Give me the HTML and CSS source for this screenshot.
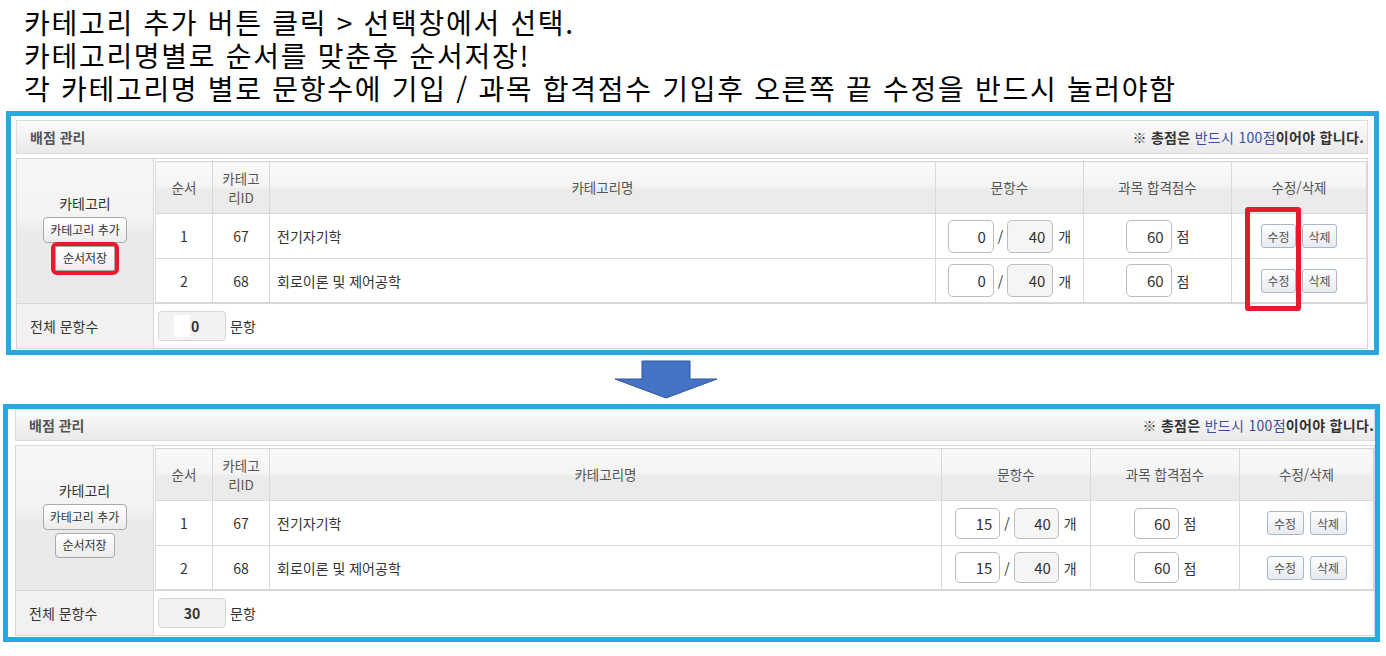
FILE: index.html
```html
<!DOCTYPE html>
<html lang="ko">
<head>
<meta charset="utf-8">
<title>배점 관리</title>
<link rel="stylesheet" href="styles.css">
</head>
<body>
<div class="notes">
  <p>카테고리 추가 버튼 클릭 &gt; 선택창에서 선택.</p>
  <p>카테고리명별로 순서를 맞춘후 순서저장!</p>
  <p>각 카테고리명 별로 문항수에 기입 / 과목 합격점수 기입후 오른쪽 끝 수정을 반드시 눌러야함</p>
</div>

<section class="panel p1">
  <div class="panel-head">
    <h2>배점 관리</h2>
    <p class="notice">※ 총점은 <span>반드시 100점</span>이어야 합니다.</p>
  </div>
  <div class="score">
    <div class="cat">
      <span class="cat-title">카테고리</span>
      <button class="btn add">카테고리 추가</button>
      <button class="btn save hl">순서저장</button>
    </div>
    <div class="list-wrap">
      <table class="list">
        <colgroup><col class="c-seq"><col class="c-id"><col class="c-name"><col class="c-cnt"><col class="c-pass"><col class="c-act"></colgroup>
        <thead>
          <tr><th>순서</th><th>카테고<br>리ID</th><th>카테고리명</th><th>문항수</th><th>과목 합격점수</th><th>수정/삭제</th></tr>
        </thead>
        <tbody>
          <tr class="r1">
            <td>1</td><td>67</td><td class="name">전기자기학</td>
            <td><input class="num" type="text" value="0" readonly><span class="sep">/</span><input class="num ro" type="text" value="40" readonly><span class="unit">개</span></td>
            <td><input class="num" type="text" value="60" readonly><span class="unit">점</span></td>
            <td><button class="act">수정</button><button class="act">삭제</button></td>
          </tr>
          <tr class="r2">
            <td>2</td><td>68</td><td class="name">회로이론 및 제어공학</td>
            <td><input class="num" type="text" value="0" readonly><span class="sep">/</span><input class="num ro" type="text" value="40" readonly><span class="unit">개</span></td>
            <td><input class="num" type="text" value="60" readonly><span class="unit">점</span></td>
            <td><button class="act">수정</button><button class="act">삭제</button></td>
          </tr>
        </tbody>
      </table>
    </div>
    <div class="total-label">전체 문항수</div>
    <div class="total-value"><span class="total-box with-caret"><span class="caret"></span>0</span><span class="unit">문항</span></div>
  </div>
  <div class="mark"></div>
</section>

<div class="arrow">
  <svg width="104" height="40" viewBox="0 0 104 40" aria-hidden="true">
    <polygon points="28,1 76,1 76,19 103,19 52,38 1,19 28,19" fill="#4472c4" stroke="#2f5597" stroke-width="1"/>
  </svg>
</div>

<section class="panel p2">
  <div class="panel-head">
    <h2>배점 관리</h2>
    <p class="notice">※ 총점은 <span>반드시 100점</span>이어야 합니다.</p>
  </div>
  <div class="score">
    <div class="cat">
      <span class="cat-title">카테고리</span>
      <button class="btn add">카테고리 추가</button>
      <button class="btn save">순서저장</button>
    </div>
    <div class="list-wrap">
      <table class="list">
        <colgroup><col class="c-seq"><col class="c-id"><col class="c-name"><col class="c-cnt"><col class="c-pass"><col class="c-act"></colgroup>
        <thead>
          <tr><th>순서</th><th>카테고<br>리ID</th><th>카테고리명</th><th>문항수</th><th>과목 합격점수</th><th>수정/삭제</th></tr>
        </thead>
        <tbody>
          <tr class="r1">
            <td>1</td><td>67</td><td class="name">전기자기학</td>
            <td><input class="num" type="text" value="15" readonly><span class="sep">/</span><input class="num ro" type="text" value="40" readonly><span class="unit">개</span></td>
            <td><input class="num" type="text" value="60" readonly><span class="unit">점</span></td>
            <td><button class="act">수정</button><button class="act">삭제</button></td>
          </tr>
          <tr class="r2">
            <td>2</td><td>68</td><td class="name">회로이론 및 제어공학</td>
            <td><input class="num" type="text" value="15" readonly><span class="sep">/</span><input class="num ro" type="text" value="40" readonly><span class="unit">개</span></td>
            <td><input class="num" type="text" value="60" readonly><span class="unit">점</span></td>
            <td><button class="act">수정</button><button class="act">삭제</button></td>
          </tr>
        </tbody>
      </table>
    </div>
    <div class="total-label">전체 문항수</div>
    <div class="total-value"><span class="total-box">30</span><span class="unit">문항</span></div>
  </div>
</section>
</body>
</html>
```

FILE: styles.css
```css
* { box-sizing: border-box; }
html, body { margin: 0; padding: 0; background: #fff; }
body {
  width: 1386px;
  font-family: "Noto Sans CJK KR", "Noto Sans", sans-serif;
  color: #333;
}

/* instructions */
.notes {
  padding: 6px 0 0 24px;
  margin-bottom: 6px;
  font-size: 28px;
  line-height: 33px;
  letter-spacing: 1.7px;
  color: #000;
}
.notes p { margin: 0; white-space: nowrap; }

/* panel frames */
.panel { border: 5px solid #27a8e1; position: relative; background: #fff; }
.p1 { margin-left: 6px; width: 1373px; padding: 4px 6px 1px 5px; }
.p2 { margin-left: 3px; width: 1377px; padding: 0 0 1px 7px; }

.panel-head {
  display: flex;
  justify-content: space-between;
  align-items: center;
  border: 1px solid #dcdcdc;
  background: linear-gradient(#fbfbfb, #e9e9e9);
  padding: 0 3px 0 13px;
}
.p1 .panel-head { height: 34px; }
.p2 .panel-head { height: 32px; padding-right: 0; }
.panel-head h2 { margin: 0; font-size: 14px; font-weight: bold; color: #555; }
.notice { margin: 0; font-size: 14px; font-weight: bold; color: #333; letter-spacing: 0.3px; }
.notice span { color: #3f4c9e; font-weight: normal; }

/* score grid */
.score {
  margin-top: 4px;
  display: grid;
  border: 1px solid #d6d6d6;
}
.p1 .score { grid-template-columns: 137px 1fr; }
.p2 .score { grid-template-columns: 138px 1fr; }

.cat {
  display: flex;
  flex-direction: column;
  align-items: center;
  justify-content: center;
  background: linear-gradient(#f7f7f7 0, #f3f3f3 60px, #eaeaea 76px, #eaeaea 100%);
  border-right: 1px solid #d6d6d6;
  border-bottom: 1px solid #d6d6d6;
  padding-top: 2px;
}
.cat-title { font-size: 14px; line-height: 18px; color: #333; margin-bottom: 5px; }

.btn {
  font-family: inherit;
  font-size: 12px;
  color: #333;
  background: linear-gradient(#ffffff, #ececec);
  border: 1px solid #a9a9a9;
  border-radius: 4px;
  padding: 0;
  line-height: 22px;
}
.btn.add { width: 84px; height: 26px; }
.btn.save { width: 60px; height: 25px; margin-top: 3px; }
.btn.hl { outline: 4px solid #e41b2c; outline-offset: 0; border-radius: 2px; }

.list-wrap {
  padding: 2px 0 0 1px;
  border-bottom: 1px solid #d6d6d6;
  background: #fff;
}
.list {
  width: 100%;
  border-collapse: collapse;
  table-layout: fixed;
}
.p1 .c-seq, .p1 .c-id { width: 57px; }
.p1 .c-cnt { width: 148px; }
.p1 .c-pass { width: 148px; }
.p1 .c-act { width: 135px; }
.p2 .c-seq, .p2 .c-id { width: 57px; }
.p2 .c-cnt { width: 149px; }
.p2 .c-pass { width: 149px; }
.p2 .c-act { width: 134px; }

.list th, .list td { border: 1px solid #d8d8d8; padding: 0; }
.list th {
  height: 52px;
  font-size: 13.5px;
  font-weight: normal;
  line-height: 19px;
  color: #555;
  background: linear-gradient(#f9f9f9 0%, #f4f4f4 47%, #ebebeb 53%, #ebebeb 100%);
}
.list td {
  font-size: 14px;
  color: #333;
  text-align: center;
  white-space: nowrap;
  background: #fff;
}
.list tr.r1 td { height: 45px; }
.list tr.r2 td { height: 44px; }
.list td.name { text-align: left; padding-left: 7px; }

.num {
  width: 46px;
  height: 33px;
  border: 1px solid #bdbdbd;
  border-radius: 5px;
  background: #fff;
  text-align: right;
  padding: 0 7px 0 0;
  font-family: inherit;
  font-size: 15px;
  color: #333;
  vertical-align: middle;
  outline: none;
}
.p2 .num { width: 45px; height: 31px; }
.num.ro { background: #f5f5f5; }
.sep { display: inline-block; margin: 0 4px; font-size: 14px; vertical-align: middle; color: #333; }
.unit { display: inline-block; margin-left: 5px; font-size: 14px; vertical-align: middle; color: #333; }

.act {
  width: 35px;
  height: 24px;
  padding: 0;
  margin: 0 3px;
  font-family: inherit;
  font-size: 12px;
  color: #555;
  border: 1px solid #a9b7c9;
  border-radius: 3px;
  background: linear-gradient(#fdfdfe, #e7ebf0);
  vertical-align: middle;
}
.p2 .act { width: 37px; }

.total-label {
  height: 44px;
  display: flex;
  align-items: center;
  padding-left: 13px;
  font-size: 14px;
  color: #333;
  background: #f1f1f1;
  border-right: 1px solid #d6d6d6;
}
.total-value {
  display: flex;
  align-items: center;
  padding-left: 4px;
}
.total-box {
  display: flex;
  align-items: center;
  justify-content: center;
  width: 68px;
  height: 30px;
  border: 1px solid #d6d6d6;
  border-radius: 4px;
  background: #f2f2f2;
  font-size: 14px;
  font-weight: bold;
  color: #333;
}
.total-box.with-caret { justify-content: flex-start; padding-left: 15px; }
.caret {
  display: inline-block;
  width: 16px;
  height: 22px;
  margin-right: 1px;
  background: #fff;
}
.total-value .unit { margin-left: 4px; }

/* annotation overlay */
.mark {
  position: absolute;
  left: 1234px;
  top: 91px;
  width: 56px;
  height: 104px;
  border: 5px solid #e41b2c;
  border-radius: 3px;
  pointer-events: none;
}

.arrow { height: 49px; padding: 5px 0 0 614px; }
.arrow svg { display: block; }
```
